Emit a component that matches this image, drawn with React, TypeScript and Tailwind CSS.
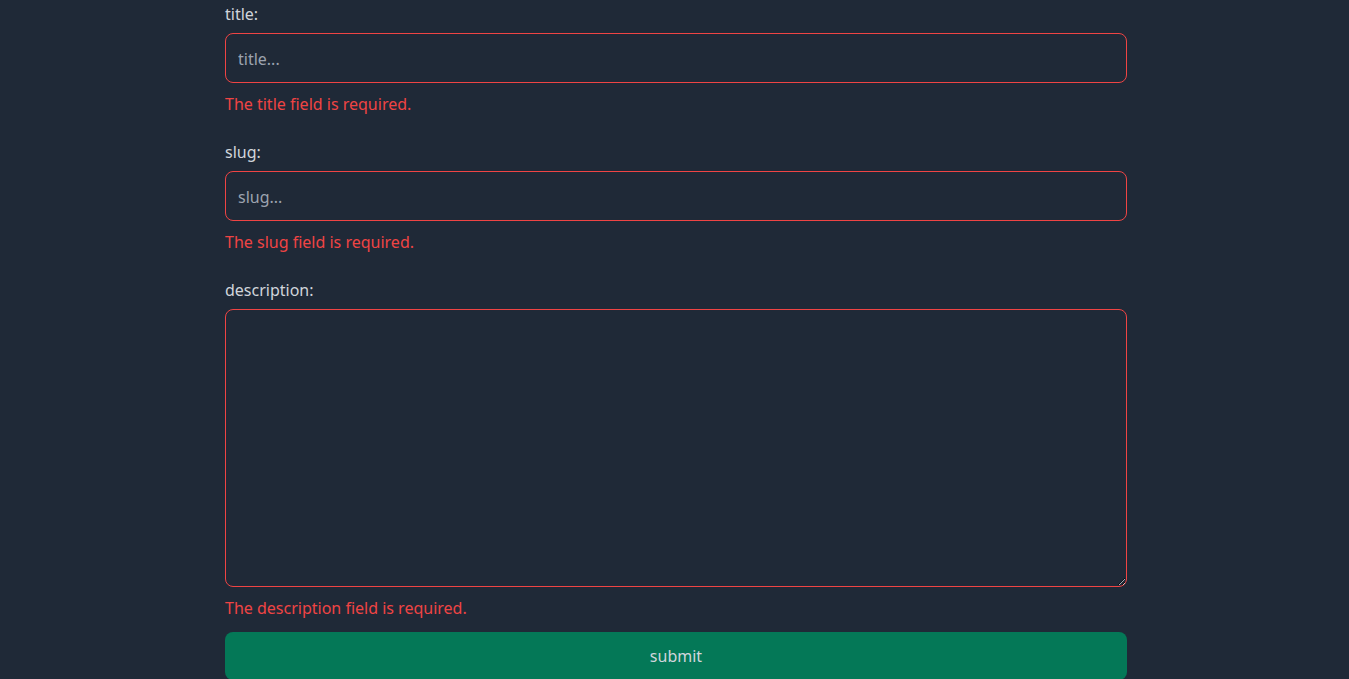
const fields = [
  { name: "title", placeholder: "title..." },
  { name: "slug", placeholder: "slug..." },
];

export default function App() {
  return (
    <div className="min-h-screen bg-[#1f2937] text-[#d1d5db] font-['Noto_Sans',sans-serif] text-base">
      <form className="ml-[225px] w-[902px] pt-[2px] flex flex-col" onSubmit={(e) => e.preventDefault()}>
        {fields.map((f) => (
          <div key={f.name} className="flex flex-col mb-6">
            <label className="leading-6">{f.name}:</label>
            <input
              placeholder={f.placeholder}
              className="mt-[7px] h-[50px] px-3 pt-[2px] rounded-lg border border-[#ef4444] bg-transparent outline-none placeholder:text-[#9ca3af]"
            />
            <p className="mt-[9px] leading-6 text-[#ef4444]">The {f.name} field is required.</p>
          </div>
        ))}

        <div className="flex flex-col">
          <label className="leading-6">description:</label>
          <textarea className="mt-[7px] h-[278px] px-3 py-2 rounded-lg border border-[#ef4444] bg-transparent outline-none" />
          <p className="mt-[9px] leading-6 text-[#ef4444]">The description field is required.</p>
        </div>

        <button type="submit" className="mt-3 h-12 rounded-lg bg-[#047857] text-[#d1d5db]">
          submit
        </button>
      </form>
    </div>
  );
}
